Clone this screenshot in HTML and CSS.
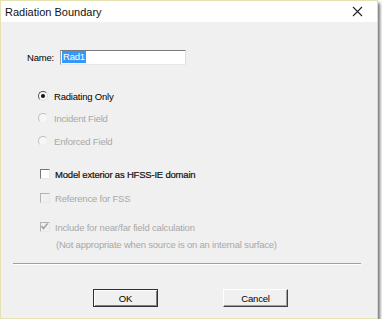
FILE: index.html
```html
<!DOCTYPE html>
<html>
<head>
    <title>Radiation Boundary</title>
    <link rel="stylesheet" href="styles.css">
</head>
<body>
    <div class="window">
        <div class="titlebar">
            <span class="title">Radiation Boundary</span>
            <svg class="close" width="11" height="11" viewBox="0 0 11 11">
                <path d="M1 1 L10 10 M10 1 L1 10" stroke="#222" stroke-width="1.1" fill="none"/>
            </svg>
        </div>
        <div class="content">
            <div class="name-row">
                <span class="label">Name:</span>
                <div class="textbox"><span class="selected">Rad1</span></div>
            </div>

            <div class="option row-radiating">
                <span class="radio checked"></span>
                <span>Radiating Only</span>
            </div>
            <div class="option disabled row-incident">
                <span class="radio"></span>
                <span>Incident Field</span>
            </div>
            <div class="option disabled row-enforced">
                <span class="radio"></span>
                <span>Enforced Field</span>
            </div>

            <div class="option boxed row-model">
                <span class="check"></span>
                <span class="strong">Model exterior as HFSS-IE domain</span>
            </div>
            <div class="option boxed disabled row-reference">
                <span class="check"></span>
                <span>Reference for FSS</span>
            </div>
            <div class="option boxed disabled row-include">
                <span class="check ticked">
                    <svg width="9" height="9" viewBox="0 0 9 9">
                        <path d="M1.5 4 L3.5 6.5 L7.5 1.5" stroke="#a0a0a0" stroke-width="1.5" fill="none"/>
                    </svg>
                </span>
                <span>Include for near/far field calculation</span>
            </div>
            <div class="note">(Not appropriate when source is on an internal surface)</div>

            <div class="separator"></div>

            <div class="buttons">
                <button class="btn default">OK</button>
                <button class="btn cancel">Cancel</button>
            </div>
        </div>
    </div>
</body>
</html>
```

FILE: styles.css
```css
body {
    margin: 0;
    background-color: #ffffff;
    font-family: "Liberation Sans", Arial, sans-serif;
}

.window {
    width: 376px;
    border: 1px solid #e4e2b0;
    border-right-color: #d8d8d8;
    background-color: #f0f0f0;
    box-shadow: 2px 3px 3px rgba(0, 0, 0, 0.55);
}

.titlebar {
    height: 21px;
    background-color: #ffffff;
    display: flex;
    align-items: center;
    justify-content: space-between;
    padding: 0 14px 0 4px;
}

.title {
    font-size: 11px;
    color: #111;
}

.content {
    padding: 27px 0 11px 0;
    font-size: 9.5px;
    letter-spacing: -0.2px;
    color: #000;
}

.name-row {
    display: flex;
    align-items: center;
    height: 16px;
    padding-left: 26px;
}

.label {
    width: 33px;
}

.textbox {
    width: 123px;
    height: 13px;
    background-color: #fff;
    border-top: 1px solid #7a7a7a;
    border-left: 1px solid #a0a0a0;
    border-right: 1px solid #e0e0e0;
    border-bottom: 1px solid #e8e8e8;
    display: flex;
    align-items: center;
    padding-left: 1px;
}

.selected {
    background-color: #3399ff;
    color: #fff;
    padding: 0 1px;
    line-height: 12px;
}

.option {
    display: flex;
    align-items: center;
    height: 14px;
    padding-left: 37px;
}

.option.boxed {
    padding-left: 39px;
}

.disabled {
    color: #a8a8a8;
}

.strong {
    color: #111;
    -webkit-text-stroke: 0.2px #111;
}

.radio {
    width: 8px;
    height: 8px;
    border-radius: 50%;
    border: 1px solid #9a9a9a;
    border-right-color: #e6e6e6;
    border-bottom-color: #e6e6e6;
    background-color: #f6f6f6;
    margin-right: 6px;
    display: flex;
    align-items: center;
    justify-content: center;
}

.radio.checked {
    border-color: #555;
    border-right-color: #ddd;
    border-bottom-color: #ddd;
}

.radio.checked::after {
    content: "";
    width: 4px;
    height: 4px;
    border-radius: 50%;
    background-color: #111;
}

.disabled .radio {
    border-color: #c0c0c0;
    border-right-color: #ececec;
    border-bottom-color: #ececec;
}

.check {
    width: 8px;
    height: 8px;
    border-top: 1px solid #777;
    border-left: 1px solid #777;
    border-right: 1px solid #e8e8e8;
    border-bottom: 1px solid #e8e8e8;
    background-color: #fff;
    margin-right: 5px;
    display: flex;
}

.disabled .check {
    border-top-color: #b4b4b4;
    border-left-color: #b4b4b4;
    background-color: #f0f0f0;
}

.check svg {
    margin: -1px 0 0 -1px;
}

.row-radiating { margin-top: 24px; }
.row-incident { margin-top: 8px; }
.row-enforced { margin-top: 9px; }
.row-model { margin-top: 19px; }
.row-reference { margin-top: 10px; }
.row-include { margin-top: 15px; }

.note {
    margin-top: 4px;
    height: 14px;
    line-height: 14px;
    padding-left: 55px;
    color: #a8a8a8;
}

.separator {
    margin: 11px 16px 0 12px;
    border-top: 1px solid #a0a0a0;
    border-bottom: 1px solid #ffffff;
}

.buttons {
    margin-top: 24px;
    display: flex;
    padding-left: 92px;
    gap: 65px;
}

.btn {
    width: 65px;
    height: 18px;
    font-family: "Liberation Sans", Arial, sans-serif;
    font-size: 9.5px;
    letter-spacing: -0.2px;
    color: #000;
    background-color: #f0f0f0;
    border: 1px solid;
    border-color: #ffffff #404040 #404040 #ffffff;
    box-shadow: inset -1px -1px 0 #a0a0a0;
    padding: 0;
}

.btn.default {
    border-color: #303030;
    box-shadow: inset 1px 1px 0 #ffffff, inset -1px -1px 0 #808080;
}
```
